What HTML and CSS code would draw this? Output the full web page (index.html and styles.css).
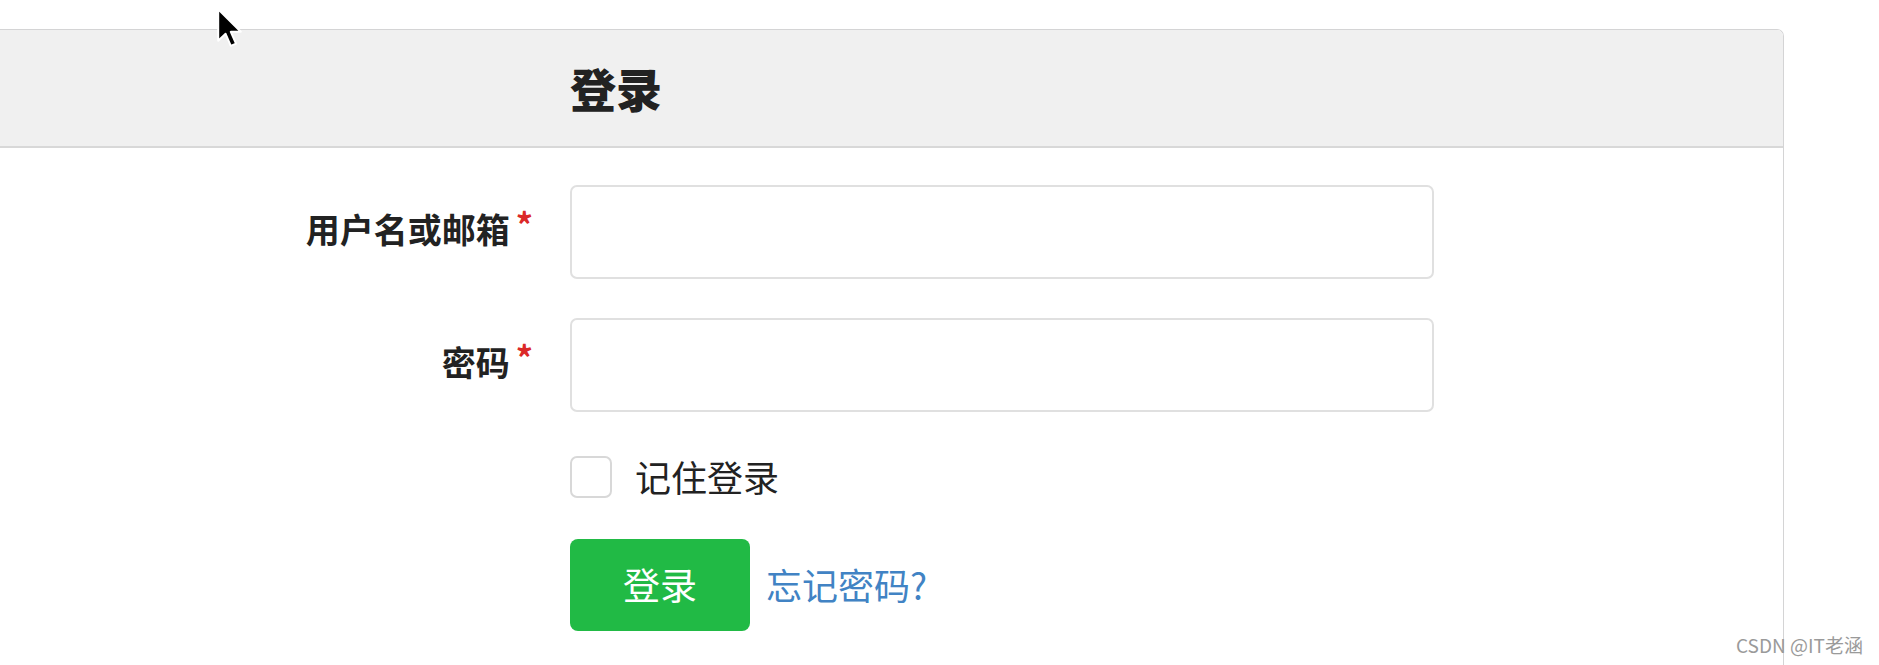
FILE: index.html
```html
<!DOCTYPE html>
<html lang="zh-CN">
<head>
<meta charset="utf-8">
<title>登录</title>
<link rel="stylesheet" href="styles.css">
</head>
<body>
<div class="page">
  <div class="card">
    <div class="card-header">
      <h2 class="title">登录</h2>
    </div>
    <form class="form">
      <label class="field-label required" for="user">用户名或邮箱</label>
      <div class="field-control"><input id="user" class="text-input" type="text"></div>

      <label class="field-label required" for="pwd">密码</label>
      <div class="field-control"><input id="pwd" class="text-input" type="password"></div>

      <div class="spacer"></div>
      <div class="field-control check-row">
        <span class="checkbox"></span>
        <span class="check-label">记住登录</span>
      </div>

      <div class="spacer"></div>
      <div class="field-control action-row">
        <button type="button" class="btn-login">登录</button>
        <a class="forgot" href="#">忘记密码?</a>
      </div>
    </form>
  </div>
</div>

<svg class="cursor" width="26" height="40" viewBox="0 0 13 20" xmlns="http://www.w3.org/2000/svg">
  <path d="M0.6 0.6 L0.6 16.4 L4.3 12.9 L6.9 18.9 L9.5 17.8 L6.9 11.9 L11.9 11.9 Z" fill="#000" stroke="#fff" stroke-width="1" stroke-linejoin="round"/>
</svg>

<div class="watermark">CSDN @IT老涵</div>
</body>
</html>
```

FILE: styles.css
```css
* { box-sizing: border-box; }

html, body {
  margin: 0;
  padding: 0;
  background: #ffffff;
  width: 1879px;
  height: 665px;
  overflow: hidden;
}

body {
  font-family: "Noto Sans CJK SC", "Noto Sans", sans-serif;
  color: #222222;
  position: relative;
}

.page {
  padding-top: 29px;
}

.card {
  margin-left: -20px;
  width: 1804px;
  height: 636px;
  border: 1px solid #d4d4d5;
  border-bottom: none;
  border-radius: 7px 7px 0 0;
  background: #ffffff;
}

.card-header {
  height: 118px;
  background: #f0f0f0;
  border-bottom: 2px solid #d8d8d8;
  border-radius: 6px 6px 0 0;
  display: flex;
  align-items: center;
  padding-left: 589px;
}

.title {
  margin: 0;
  font-size: 46px;
  font-weight: 900;
  line-height: 1;
  color: #222222;
  padding-bottom: 2px;
}

.form {
  display: grid;
  grid-template-columns: 552px 864px;
  column-gap: 37px;
  row-gap: 39px;
  padding-top: 37px;
  align-items: center;
}

.field-label {
  justify-self: end;
  font-size: 34px;
  font-weight: 700;
  line-height: 1;
  color: #222222;
  white-space: nowrap;
  padding-bottom: 6px;
}

.field-label.required::after {
  content: "*";
  color: #db2828;
  font-size: 34px;
  margin-left: 6px;
  vertical-align: 0.14em;
  line-height: 0;
}

.text-input {
  display: block;
  width: 864px;
  height: 94px;
  border: 2px solid #e0e0e0;
  border-radius: 7px;
  background: #ffffff;
  outline: none;
  padding: 0 20px;
  font-size: 34px;
  font-family: inherit;
}

.check-row {
  display: flex;
  align-items: center;
  height: 46px;
  gap: 23px;
  margin-top: 3px;
}

.checkbox {
  display: block;
  width: 42px;
  height: 42px;
  border: 2px solid #d8d8d8;
  border-radius: 7px;
  background: #ffffff;
}

.check-label {
  font-size: 36px;
  line-height: 1;
  color: #222222;
  padding-bottom: 2px;
}

.action-row {
  display: flex;
  align-items: center;
  gap: 16px;
}

.btn-login {
  width: 180px;
  height: 92px;
  border: none;
  border-radius: 8px;
  background: #21ba45;
  color: #ffffff;
  font-family: inherit;
  font-size: 37px;
  line-height: 1;
  padding: 0 0 2px 0;
}

.forgot {
  font-size: 36px;
  line-height: 1;
  color: #4183c4;
  text-decoration: none;
  padding-bottom: 2px;
}

.cursor {
  position: absolute;
  left: 217px;
  top: 8px;
}

.watermark {
  position: absolute;
  left: 1736px;
  top: 633px;
  font-size: 19px;
  line-height: 24px;
  color: #9a9a9a;
  white-space: nowrap;
  font-family: "Noto Sans CJK SC", "Noto Sans", sans-serif;
}
```
